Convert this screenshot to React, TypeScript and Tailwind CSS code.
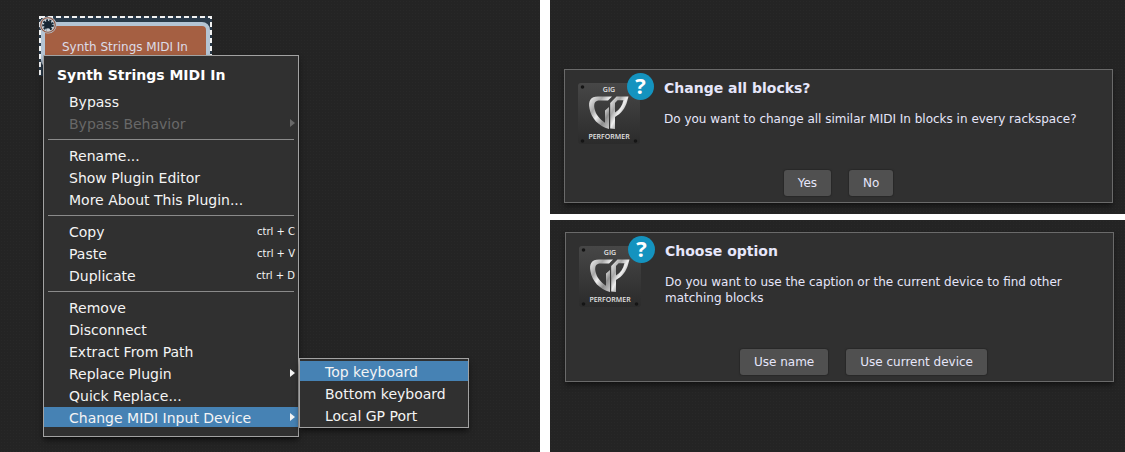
import { ReactNode } from 'react'
import clsx from 'clsx'

interface MenuEntry {
  label: string
  shortcut?: string
  disabled?: boolean
  active?: boolean
  submenu?: boolean
}

const menuGroups: MenuEntry[][] = [
  [{ label: 'Bypass' }, { label: 'Bypass Behavior', disabled: true, submenu: true }],
  [{ label: 'Rename...' }, { label: 'Show Plugin Editor' }, { label: 'More About This Plugin...' }],
  [
    { label: 'Copy', shortcut: 'ctrl + C' },
    { label: 'Paste', shortcut: 'ctrl + V' },
    { label: 'Duplicate', shortcut: 'ctrl + D' },
  ],
  [
    { label: 'Remove' },
    { label: 'Disconnect' },
    { label: 'Extract From Path' },
    { label: 'Replace Plugin', submenu: true },
    { label: 'Quick Replace...' },
    { label: 'Change MIDI Input Device', submenu: true, active: true },
  ],
]

const devices: MenuEntry[] = [
  { label: 'Top keyboard', active: true },
  { label: 'Bottom keyboard' },
  { label: 'Local GP Port' },
]

// dark surface with a faint grain
const surface = 'bg-[#242424] bg-[radial-gradient(#282828_1px,transparent_1px)] bg-[size:3px_3px]'

function MenuItem({ label, shortcut, disabled, active, submenu }: MenuEntry) {
  return (
    <button
      type="button"
      role="menuitem"
      disabled={disabled}
      aria-haspopup={submenu ? 'menu' : undefined}
      className={clsx(
        'flex h-5 w-full items-center justify-between pl-[25px] pr-[3px] text-left text-sm leading-5 whitespace-nowrap',
        disabled ? 'text-[#686868]' : 'text-[#f4f4f4]',
        active && 'bg-[#4682b4]'
      )}
    >
      <span className="pt-0.5">{label}</span>
      {shortcut && <span className="pt-0.5 text-[10px]">{shortcut}</span>}
      {submenu && (
        <svg width="5" height="8" viewBox="0 0 5 8" fill="currentColor" aria-hidden="true">
          <path d="M0 0L5 4L0 8Z" />
        </svg>
      )}
    </button>
  )
}

function ContextMenu() {
  return (
    <div
      role="menu"
      className="relative z-10 -mt-[21px] ml-1 w-64 border border-[#a2a2a2] bg-[#303030] pb-[9px] shadow-md shadow-black/50"
    >
      <h2 className="pt-[9px] pb-[6px] pl-[13px] text-sm leading-5 font-bold text-white">
        Synth Strings MIDI In
      </h2>
      <div className="flex flex-col gap-0.5">
        {menuGroups.map((group, i) => (
          <div key={i} className="flex flex-col gap-0.5">
            {i > 0 && <hr className="mx-1 mt-1 mb-[3px] border-[#8a8a8a]" />}
            {group.map((item) => (
              <MenuItem key={item.label} {...item} />
            ))}
          </div>
        ))}
      </div>
      <div
        role="menu"
        className="absolute bottom-2 left-full ml-px flex w-[170px] flex-col gap-0.5 border border-[#a2a2a2] bg-[#303030] py-0.5 shadow-md shadow-black/50"
      >
        {devices.map((item) => (
          <MenuItem key={item.label} {...item} />
        ))}
      </div>
    </div>
  )
}

function MidiBadge() {
  return (
    <svg
      width="18"
      height="18"
      viewBox="0 0 18 18"
      className="absolute top-0 left-0"
      aria-hidden="true"
    >
      <circle cx="9" cy="9" r="8.6" fill="#b9c4cf" />
      <circle cx="9" cy="9" r="7.8" fill="#8f5742" />
      <circle cx="9" cy="9" r="6.7" fill="#c9d2da" />
      <circle cx="9" cy="9" r="4" fill="#172633" />
      <circle
        cx="9"
        cy="9"
        r="4.8"
        fill="none"
        stroke="#172633"
        strokeWidth="2"
        strokeDasharray="2 1.35"
      />
      <path d="M7.8 12.4H10.2V15H7.8Z" fill="#c9d2da" />
    </svg>
  )
}

function PluginBlock() {
  return (
    <div className="relative h-[60px] w-[173px] bg-[#2a3a49] px-0.5 pt-1.5 pb-2">
      <svg className="absolute inset-0 h-full w-full" aria-hidden="true">
        <rect
          x="1"
          y="1"
          width="171"
          height="58"
          fill="none"
          stroke="#f2f2f2"
          strokeWidth="2"
          strokeDasharray="5 3"
        />
      </svg>
      <div className="h-full rounded-lg border-4 border-[#b4c4d4] bg-[#a55f42] pt-[11px] pl-[17px] text-xs leading-5 whitespace-nowrap text-[#dcdce8]">
        Synth Strings MIDI In
      </div>
      <MidiBadge />
    </div>
  )
}

function Logo() {
  return (
    <svg
      width="78"
      height="75"
      viewBox="0 -2 78 75"
      className="-mb-5 shrink-0"
      role="img"
      aria-label="Gig Performer"
    >
      <defs>
        <linearGradient id="plate" x1="0" y1="0" x2="0" y2="1">
          <stop offset="0" stopColor="#474747" />
          <stop offset="1" stopColor="#2b2b2b" />
        </linearGradient>
        <linearGradient id="metal" x1="0" y1="0" x2="1" y2="1">
          <stop offset="0" stopColor="#f4f4f4" />
          <stop offset="0.3" stopColor="#a8a8a8" />
          <stop offset="0.48" stopColor="#efefef" />
          <stop offset="0.7" stopColor="#8e8e8e" />
          <stop offset="1" stopColor="#dcdcdc" />
        </linearGradient>
      </defs>
      <rect x="0" y="11" width="62" height="61" rx="3" fill="url(#plate)" />
      <g fill="#151515">
        <circle cx="4.5" cy="15" r="1.8" />
        <circle cx="4.5" cy="69" r="1.8" />
        <circle cx="57.5" cy="69" r="1.8" />
      </g>
      <g fill="url(#metal)">
        <path d="M34 24.5H20C12.5 24.5 10 29 11.5 36.5C13.3 46.5 20.5 54 31 57V35L27 38.5V50.8C21.5 47 17.5 42.3 16.4 36C15.6 30.6 17.5 28.4 21.5 28.4H30Z" />
        <path
          fillRule="evenodd"
          d="M32.2 31L38.5 24.5H50.5L49.4 28.6C47.3 36.8 43 41.8 37 45V57L32.2 56.5Z M37 31V40.6C41.4 37.6 44.2 33.8 45.4 28.2H39.6Z"
        />
      </g>
      <g fill="#e4e4e4" textAnchor="middle" className="font-['Open_Sans',sans-serif] font-semibold">
        <text x="31" y="20" fontSize="7">
          GIG
        </text>
        <text x="31" y="67" fontSize="7">
          PERFORMER
        </text>
      </g>
      <circle cx="62.5" cy="14.5" r="13.5" fill="#1493bf" />
      <text
        x="62.5"
        y="22"
        fontSize="22"
        fill="#ffffff"
        textAnchor="middle"
        className="font-['Open_Sans',sans-serif] font-bold"
      >
        ?
      </text>
    </svg>
  )
}

interface DialogProps {
  title: string
  children: ReactNode
  actions: string[]
  actionsClassName?: string
}

function Dialog({ title, children, actions, actionsClassName }: DialogProps) {
  return (
    <div
      role="dialog"
      aria-label={title}
      className="border border-[#6a6a6a] bg-[#303030] pb-1.5 text-[#e6e6fa] shadow-md shadow-black/40"
    >
      <div className="flex items-start gap-2 pr-6 pl-[13px]">
        <Logo />
        <div className="pt-2 pb-[43px]">
          <h2 className="text-sm leading-5 font-bold">{title}</h2>
          <p className="mt-[13px] text-xs leading-4">{children}</p>
        </div>
      </div>
      <div className={clsx('flex justify-center gap-[18px]', actionsClassName)}>
        {actions.map((action) => (
          <button
            key={action}
            type="button"
            className="h-[26px] rounded-[3px] bg-[#505050] px-3.5 text-xs shadow-[0_0_1px_1px_#292929]"
          >
            {action}
          </button>
        ))}
      </div>
    </div>
  )
}

export default function App() {
  return (
    <div className="grid min-h-screen grid-cols-[540fr_575fr] gap-2.5 bg-white font-['DejaVu_Sans',sans-serif]">
      <section className={clsx(surface, 'pt-4 pb-3.5 pl-[39px]')}>
        <PluginBlock />
        <ContextMenu />
      </section>
      <div className="flex flex-col gap-1.5">
        <section className={clsx(surface, 'pt-[69px] pr-3 pb-[11px] pl-3.5')}>
          <Dialog title="Change all blocks?" actions={['Yes', 'No']}>
            Do you want to change all similar MIDI In blocks in every rackspace?
          </Dialog>
        </section>
        <section className={clsx(surface, 'flex-1 pt-3 pr-[11px] pb-3 pl-[15px]')}>
          <Dialog
            title="Choose option"
            actions={['Use name', 'Use current device']}
            actionsClassName="pl-12"
          >
            Do you want to use the caption or the current device to find other matching blocks
          </Dialog>
        </section>
      </div>
    </div>
  )
}
